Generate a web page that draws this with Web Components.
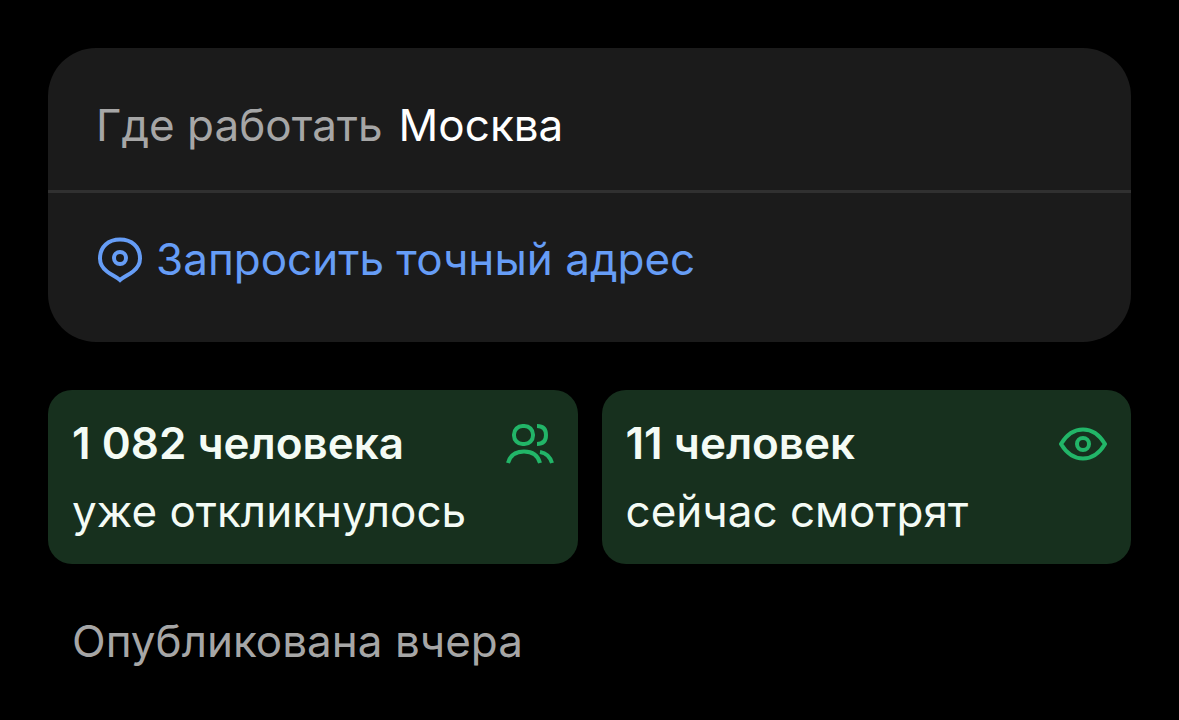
<!DOCTYPE html>
<html lang="ru">
<head>
<meta charset="utf-8">
<meta name="viewport" content="width=device-width, initial-scale=1">
<title>Вакансия</title>
<style>
  body {
    margin: 0;
    background-color: #000;
    color: #fff;
    font-family: Inter, "Liberation Sans", sans-serif;
    font-size: 44px;
    line-height: 58px;
  }
</style>
</head>
<body>
<vacancy-page></vacancy-page>

<script>
const icons = {
  pin: `
    <svg width="48" height="48" viewBox="0 0 48 48" fill="none" stroke="currentColor" stroke-width="4" aria-hidden="true">
      <path d="M24 45C20 41.500 15.500 40 11 36.500C6.500 33 4 29 4 23.500C4 11.500 12.500 4.500 24 4.500S44 11.500 44 23.500C44 29 41.500 33 37 36.500C32.500 40 28 41.500 24 45Z"/>
      <circle cx="24" cy="23" r="6"/>
    </svg>`,
  people: `
    <svg width="48" height="48" viewBox="0 0 48 48" fill="none" stroke="currentColor" stroke-width="4" aria-hidden="true">
      <rect x="8" y="7" width="19" height="18" rx="8.500"/>
      <path d="M31 7C37 7 40 10 40 16S37 25 31 25"/>
      <path d="M2 44C4 36.500 9.500 32.500 18 32.500S32 36.500 34 44"/>
      <path d="M34 33C40 34 44 37.500 46 44"/>
    </svg>`,
  eye: `
    <svg width="48" height="48" viewBox="0 0 48 48" fill="none" stroke="currentColor" stroke-width="4" aria-hidden="true">
      <path d="M2 25C8 15 15 10.500 24 10.500S40 15 46 25C40 35 33 39.500 24 39.500S8 35 2 25Z"/>
      <circle cx="24" cy="25" r="6"/>
    </svg>`
};

class VacancyIcon extends HTMLElement {
  constructor() {
    super();
    this.attachShadow({ mode: "open" });
  }

  connectedCallback() {
    this.shadowRoot.innerHTML = `
      <style>
        :host {
          display: block;
          flex: none;
          width: 48px;
          height: 48px;
        }

        svg {
          display: block;
        }
      </style>
      ${icons[this.getAttribute("name")]}
    `;
  }
}

customElements.define("vacancy-icon", VacancyIcon);

class LocationCard extends HTMLElement {
  constructor() {
    super();
    this.attachShadow({ mode: "open" });

    this.shadowRoot.innerHTML = `
      <style>
        :host {
          display: block;
          background-color: #1b1b1b;
          border-radius: 48px;
        }

        .place {
          display: flex;
          flex-wrap: wrap;
          gap: 0 16px;
          padding: 48px 48px 36px;
          border-bottom: 3px solid #303030;
        }

        .label {
          color: #a6a6a6;
        }

        .request {
          padding: 37px 48px 54px;
        }
      </style>

      <div class="place">
        <span class="label"><slot name="label"></slot></span>
        <span><slot name="city"></slot></span>
      </div>
      <div class="request"><slot></slot></div>
    `;
  }
}

customElements.define("location-card", LocationCard);

class AddressLink extends HTMLElement {
  constructor() {
    super();
    this.attachShadow({ mode: "open" });

    this.shadowRoot.innerHTML = `
      <style>
        :host {
          display: flex;
        }

        a {
          display: flex;
          align-items: center;
          gap: 12px;
          color: #669df6;
          text-decoration: none;
        }
      </style>

      <a href="#address">
        <vacancy-icon name="pin"></vacancy-icon>
        <span><slot></slot></span>
      </a>
    `;
  }
}

customElements.define("address-link", AddressLink);

class StatCard extends HTMLElement {
  constructor() {
    super();
    this.attachShadow({ mode: "open" });
  }

  connectedCallback() {
    this.shadowRoot.innerHTML = `
      <style>
        :host {
          display: flex;
          flex-direction: column;
          gap: 10px;
          padding: 24px;
          border-radius: 24px;
          background-color: #17301e;
          color: #f4fbf5;
        }

        .top {
          display: flex;
          align-items: center;
          justify-content: space-between;
          font-weight: 600;
        }

        vacancy-icon {
          color: #22b568;
        }
      </style>

      <div class="top">
        <span><slot name="count"></slot></span>
        <vacancy-icon name="${this.getAttribute("icon")}"></vacancy-icon>
      </div>
      <div><slot></slot></div>
    `;
  }
}

customElements.define("stat-card", StatCard);

class VacancyPage extends HTMLElement {
  constructor() {
    super();
    this.attachShadow({ mode: "open" });

    this.shadowRoot.innerHTML = `
      <style>
        :host {
          display: block;
          padding: 48px 48px 0;
        }

        main {
          display: flex;
          flex-direction: column;
          gap: 48px;
        }

        .stats {
          display: grid;
          grid-template-columns: 1fr 1fr;
          gap: 24px;
        }

        .published {
          margin: 0;
          padding: 0 24px;
          color: #a6a6a6;
        }
      </style>

      <main>
        <location-card>
          <span slot="label">Где работать</span>
          <span slot="city">Москва</span>
          <address-link>Запросить точный адрес</address-link>
        </location-card>
        <div class="stats">
          <stat-card icon="people">
            <span slot="count">1&nbsp;082 человека</span>
            уже откликнулось
          </stat-card>
          <stat-card icon="eye">
            <span slot="count">11 человек</span>
            сейчас смотрят
          </stat-card>
        </div>
        <p class="published">Опубликована вчера</p>
      </main>
    `;
  }
}

customElements.define("vacancy-page", VacancyPage);
</script>
</body>
</html>
